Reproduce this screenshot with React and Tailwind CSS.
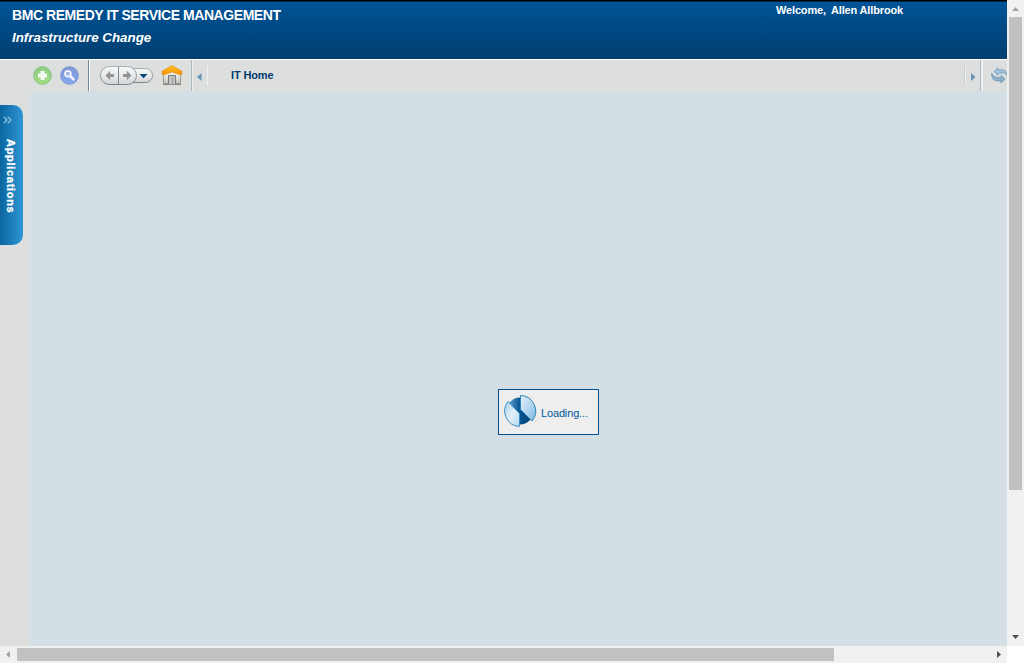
import React from "react";

function AddIcon() {
  return (
    <svg width="20" height="20" viewBox="0 0 20 20" className="block shrink-0">
      <defs>
        <linearGradient id="addFill" x1="0" y1="0" x2="0" y2="1">
          <stop offset="0" stopColor="#8ccd84" />
          <stop offset="1" stopColor="#a3de7e" />
        </linearGradient>
      </defs>
      <circle cx="10.500" cy="9.500" r="8.800" fill="url(#addFill)" stroke="#87bf83" />
      <path d="M8.500 5h4v2.500H15v4h-2.500V14h-4v-2.500H6v-4h2.500z" fill="#f4f7f2" />
    </svg>
  );
}

function SearchIcon() {
  return (
    <svg width="20" height="20" viewBox="0 0 20 20" className="block shrink-0">
      <defs>
        <linearGradient id="searchFill" x1="0" y1="0" x2="0" y2="1">
          <stop offset="0" stopColor="#7f96d6" />
          <stop offset="1" stopColor="#84aaf0" />
        </linearGradient>
      </defs>
      <circle cx="10.500" cy="9.500" r="8.800" fill="url(#searchFill)" stroke="#7c91cf" />
      <circle cx="8.900" cy="7.700" r="2.900" fill="#9db5e6" stroke="#f2f5fb" strokeWidth="1.700" />
      <path d="M11.300 10.100l3.200 3.200" stroke="#f2f5fb" strokeWidth="2.600" strokeLinecap="round" />
    </svg>
  );
}

function HistoryButtons() {
  return (
    <svg width="54" height="20" viewBox="0 0 54 20" className="block shrink-0">
      <defs>
        <linearGradient id="pillFill" x1="0" y1="0" x2="0" y2="1">
          <stop offset="0" stopColor="#f7f8f9" />
          <stop offset="0.5" stopColor="#e8eaec" />
          <stop offset="1" stopColor="#d2d5d8" />
        </linearGradient>
        <linearGradient id="pillEdge" x1="0" y1="0" x2="0" y2="1">
          <stop offset="0" stopColor="#a9aeb5" />
          <stop offset="1" stopColor="#7e8388" />
        </linearGradient>
      </defs>
      <rect x="26" y="2.500" width="26.500" height="14" rx="7" fill="url(#pillFill)" stroke="url(#pillEdge)" />
      <rect x="0.500" y="0.500" width="36" height="18" rx="9" fill="url(#pillFill)" stroke="url(#pillEdge)" />
      <path d="M18.500 1v17" stroke="#85898e" />
      <path d="M5.500 9.500l4.700-4.700v3.100H14v3.200h-3.800v3.100z" fill="#939393" />
      <path d="M31.500 9.500l-4.700-4.700v3.100H23v3.200h3.800v3.100z" fill="#939393" />
      <path d="M39.500 8h8l-4 4.200z" fill="#00457c" />
    </svg>
  );
}

function HomeIcon() {
  return (
    <svg width="22" height="21" viewBox="0 0 22 21" className="block shrink-0">
      <defs>
        <linearGradient id="roof" x1="0" y1="0" x2="0" y2="1">
          <stop offset="0" stopColor="#ffc31c" />
          <stop offset="1" stopColor="#f9930a" />
        </linearGradient>
        <linearGradient id="wall" x1="0" y1="0" x2="0" y2="1">
          <stop offset="0" stopColor="#ffffff" />
          <stop offset="1" stopColor="#c5c2bb" />
        </linearGradient>
      </defs>
      <path d="M2.500 9L11 5l8.500 4v9.500h-17z" fill="url(#wall)" stroke="#9a9792" />
      <path d="M2 19.500h18" stroke="#8c8985" />
      <path d="M7.500 19v-8.500h7V19" fill="#c4c4c3" stroke="#7c7b79" />
      <path d="M11.500 12v7" stroke="#979797" />
      <path d="M11 0.600L1 6.200v3.300h3L11 7l7 2.500h3V6.200z" fill="url(#roof)" stroke="#e3951f" strokeWidth="0.700" />
    </svg>
  );
}

function RefreshIcon() {
  return (
    <svg width="17" height="17" viewBox="0 0 17 17" className="block shrink-0">
      <path
        d="M3 4.500L7 .7v2.100h4.500C14.500 3 16 5 16.300 8.800 14.800 6.700 13.300 6 11 6H7v2.300z"
        fill="#9fc4df" stroke="#709dbf" strokeWidth="0.800"
      />
      <path
        d="M14 12L10 8.500v2H6.500C4 10.300 2.200 9 .6 6.300c0 4.200 1.600 7.400 5 7.600H10v2.200z"
        fill="#8db3ce" stroke="#6f96b4" strokeWidth="0.800"
      />
    </svg>
  );
}

function Spinner() {
  return (
    <svg width="34" height="34" viewBox="0 0 34 34" className="block shrink-0">
      <defs>
        <linearGradient id="wingLeft" x1="0" y1="0" x2="1" y2="1">
          <stop offset="0" stopColor="#a5d0ec" />
          <stop offset="0.500" stopColor="#e3f1fa" />
          <stop offset="1" stopColor="#b4d8ee" />
        </linearGradient>
        <linearGradient id="wingRight" x1="0" y1="0" x2="1" y2="1">
          <stop offset="0" stopColor="#e3f1fa" />
          <stop offset="0.500" stopColor="#b3d7ef" />
          <stop offset="1" stopColor="#79b8e0" />
        </linearGradient>
        <linearGradient id="core" x1="0" y1="0" x2="1" y2="0">
          <stop offset="0" stopColor="#6cb0df" />
          <stop offset="0.500" stopColor="#07538f" />
          <stop offset="1" stopColor="#003f75" />
        </linearGradient>
      </defs>
      <circle cx="17" cy="17" r="13.500" fill="url(#core)" />
      <path d="M5 7.500A15.500 15.500 0 0 0 16.500 32.500V19.500z" fill="url(#wingLeft)" stroke="#3c8ec4" />
      <path d="M17.500 1.500A15.500 15.500 0 0 1 29 27L17.500 15.500z" fill="url(#wingRight)" stroke="#3283b7" />
    </svg>
  );
}

function Header() {
  return (
    <header className="flex h-[60px] shrink-0 justify-between border-t border-b border-t-black border-b-white bg-linear-to-b from-[#005498] to-[#003f70] font-bold text-white shadow-[inset_0_1px_0_#002747]">
      <div className="pt-[5px] pl-3 whitespace-nowrap">
        <h1 className="text-[14px] leading-[18px] tracking-[-0.440px]">BMC REMEDY IT SERVICE MANAGEMENT</h1>
        <h2 className="mt-[5px] text-[13.333px] leading-[18px] italic">Infrastructure Change</h2>
      </div>
      <div className="mr-[104px] flex gap-[5px] pt-[2px] text-[11px] leading-[14px] tracking-[-0.150px] whitespace-nowrap">
        <span>Welcome,</span>
        <span>Allen Allbrook</span>
      </div>
    </header>
  );
}

function Toolbar() {
  return (
    <nav className="flex h-[31px] shrink-0 items-center overflow-hidden bg-[#dddfdf]">
      <div className="flex h-full w-[89px] shrink-0 items-center gap-[7px] border-r border-[#6d8798] pl-8">
        <AddIcon />
        <SearchIcon />
      </div>
      <div className="flex h-full w-[103px] shrink-0 items-center gap-[7px] border-r border-[#a9b7c0] border-l border-l-white pl-[10px]">
        <HistoryButtons />
        <HomeIcon />
      </div>
      <div className="flex h-full w-[15px] items-center border-l border-l-[#eceeee] pt-[2px] pl-[4px]">
        <svg width="5" height="8" viewBox="0 0 5 8"><path d="M4.500 0v8L0 4z" fill="#6894b4" /></svg>
      </div>
      <div className="h-[19px] w-px bg-[#eef0f0]" />
      <span className="-mt-[2px] ml-[23px] flex-1 text-[11px] leading-[14px] font-bold tracking-[-0.150px] text-[#003c6c]">IT Home</span>
      <div className="h-[19px] w-[2px] border-r border-l border-r-[#eef0f0] border-l-[#cbcfd1]" />
      <div className="flex h-full w-[15px] items-center border-r border-[#a9b7c0] pt-[2px] pl-[5px]">
        <svg width="5" height="8" viewBox="0 0 5 8"><path d="M0 0v8l4.500-4z" fill="#6894b4" /></svg>
      </div>
      <div className="flex h-full w-[26px] items-center overflow-hidden border-l-2 border-[#ebeeee] pl-[8px]">
        <RefreshIcon />
      </div>
    </nav>
  );
}

function ApplicationsTab() {
  return (
    <aside className="w-[30px] shrink-0 bg-[#dddfdf] pt-[14px]">
      <div className="flex h-[140px] w-[23px] flex-col rounded-r-[10px] bg-linear-to-r from-[#0966a0] to-[#2e96d5] pt-[11px]">
        <svg width="9" height="8" viewBox="0 0 9 8" className="ml-[3px] block shrink-0">
          <path d="M.7.7L4 4 .7 7.300M4.700.7L8 4 4.700 7.300" fill="none" stroke="#8dc4e6" strokeWidth="1.200" />
        </svg>
        <span className="mt-[15px] ml-[4px] w-[14px] text-[11px] leading-[14px] font-bold tracking-[0.700px] whitespace-nowrap text-white [-webkit-text-stroke:0.3px_white] [writing-mode:vertical-rl]">Applications</span>
      </div>
    </aside>
  );
}

function LoadingBox() {
  return (
    <div className="mt-[298px] ml-[468px] flex h-[46px] w-[101px] items-center border border-[#00508e] bg-[#eeeeee] pl-1">
      <div className="-mt-[3px]"><Spinner /></div>
      <span className="mt-[2px] ml-[4px] text-[11px] leading-[14px] tracking-[-0.150px] whitespace-nowrap text-[#00599c]">Loading...</span>
    </div>
  );
}

function VerticalScrollbar() {
  return (
    <div className="flex w-[17px] shrink-0 flex-col items-center bg-[#f1f1f1]">
      <div className="flex h-[17px] items-center pt-px">
        <svg width="7" height="4" viewBox="0 0 7 4"><path d="M0 4h7L3.500 0z" fill="#a3a3a3" /></svg>
      </div>
      <div className="h-[473px] w-[13px] bg-[#c1c1c1]" />
      <div className="mt-auto flex h-[17px] items-center pb-[2px]">
        <svg width="7" height="4" viewBox="0 0 7 4"><path d="M0 0h7L3.500 4z" fill="#505050" /></svg>
      </div>
    </div>
  );
}

function HorizontalScrollbar() {
  return (
    <div className="flex h-[17px] shrink-0">
      <div className="flex w-[1007px] items-center bg-[#f1f1f1]">
        <div className="w-[17px] pl-[6px]">
          <svg width="4" height="7" viewBox="0 0 4 7" className="block"><path d="M4 0v7L0 3.500z" fill="#a3a3a3" /></svg>
        </div>
        <div className="h-[13px] w-[817px] bg-[#c1c1c1]" />
        <svg width="4" height="7" viewBox="0 0 4 7" className="mr-[6px] ml-auto"><path d="M0 0v7l4-3.500z" fill="#505050" /></svg>
      </div>
      <div className="w-[17px] bg-white" />
    </div>
  );
}

export default function App() {
  return (
    <div className="flex h-[663px] w-[1024px] flex-col overflow-hidden font-['Liberation_Sans',Arial,sans-serif]">
      <div className="flex min-h-0 flex-1">
        <div className="flex w-[1007px] shrink-0 flex-col">
          <Header />
          <Toolbar />
          <div className="flex flex-1">
            <ApplicationsTab />
            <main className="flex-1 bg-[#d4dfe5]">
              <LoadingBox />
            </main>
          </div>
        </div>
        <VerticalScrollbar />
      </div>
      <HorizontalScrollbar />
    </div>
  );
}
